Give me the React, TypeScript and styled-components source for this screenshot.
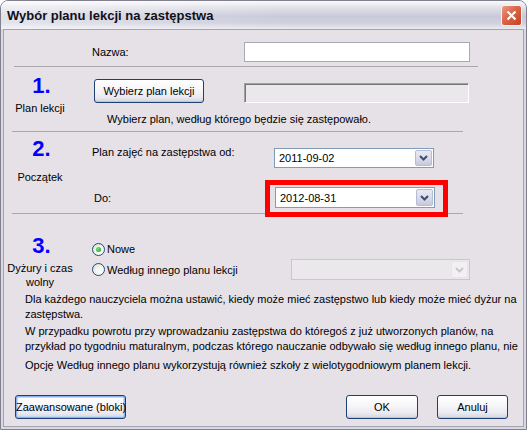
import React from "react";
import styled, { createGlobalStyle } from "styled-components";

const GlobalStyle = createGlobalStyle`
  html, body {
    margin: 0;
    padding: 0;
    background: #ffffff;
  }
  body {
    font-family: "Liberation Sans", Arial, sans-serif;
    font-size: 11px;
    color: #000;
  }
`;

const Window = styled.div`
  width: 527px;
  height: 430px;
  box-sizing: border-box;
  display: flex;
  flex-direction: column;
  border: 1px solid #80808f;
  border-radius: 8px 8px 0 0;
  overflow: hidden;
  background: #d9d7e2;
`;

const TitleBar = styled.div`
  height: 28px;
  flex: none;
  display: flex;
  align-items: center;
  justify-content: space-between;
  padding: 0 4px 0 6px;
  background: linear-gradient(to right, rgba(255, 255, 255, 0.45), rgba(255, 255, 255, 0) 55%),
    linear-gradient(#fbfbfd 0%, #e2e2ea 22%, #c9c9d9 55%, #cfcfdd 78%, #ebebf1 100%);
`;

const TitleText = styled.span`
  font-family: "Liberation Sans", Arial, sans-serif;
  font-weight: bold;
  font-size: 13px;
  color: #101018;
`;

const CloseButton = styled.span`
  width: 21px;
  height: 21px;
  box-sizing: border-box;
  border: 1px solid #f4f2f2;
  border-radius: 3px;
  background: linear-gradient(135deg, #ec9c86 0%, #dc6a4c 40%, #c4401f 100%);
  display: flex;
  align-items: center;
  justify-content: center;
  margin-top: 1px;
`;

const Frame = styled.div`
  flex: 1;
  display: flex;
  padding: 0 2px 2px;
`;

const Client = styled.div`
  flex: 1;
  display: flex;
  flex-direction: column;
  border: 1px solid #a3a3b3;
  background: #e6e1e7;
`;

const Section = styled.div<{ $h: number }>`
  height: ${(p) => p.$h}px;
  display: flex;
  flex: none;
`;

const NumCol = styled.div<{ $pt: number; $gap: number }>`
  width: 72px;
  flex: none;
  display: flex;
  flex-direction: column;
  align-items: center;
  padding-top: ${(p) => p.$pt}px;
  gap: ${(p) => p.$gap}px;
`;

const StepNumber = styled.span`
  color: #0000ff;
  font-family: "Liberation Sans", Arial, sans-serif;
  font-weight: bold;
  font-size: 22px;
  line-height: 22px;
  height: 22px;
  padding-left: 3px;
`;

const StepLabel = styled.span`
  line-height: 14px;
  text-align: center;
  width: 72px;
`;

const Body = styled.div<{ $pt: number; $gap?: number }>`
  flex: 1;
  display: flex;
  flex-direction: column;
  padding-left: 16px;
  padding-top: ${(p) => p.$pt}px;
  gap: ${(p) => p.$gap ?? 0}px;
`;

const Row = styled.div<{ $align?: string }>`
  display: flex;
  align-items: ${(p) => p.$align ?? "center"};
`;

const FieldLabel = styled.span<{ $w: number; $ml?: number; $mt?: number }>`
  width: ${(p) => p.$w}px;
  margin-left: ${(p) => p.$ml ?? 0}px;
  margin-top: ${(p) => p.$mt ?? 0}px;
  flex: none;
  line-height: 14px;
  white-space: nowrap;
`;

const TextInput = styled.div<{ $w: number }>`
  width: ${(p) => p.$w}px;
  height: 20px;
  box-sizing: border-box;
  border: 1px solid #a5acb5;
  background: #fff;
`;

const SunkenBox = styled.div<{ $w: number }>`
  width: ${(p) => p.$w}px;
  height: 20px;
  margin-left: 40px;
  box-sizing: border-box;
  border: 1px solid;
  border-color: #a0a0a0 #ffffff #ffffff #a0a0a0;
  box-shadow: inset 1px 1px 0 #777777, inset -1px -1px 0 #e8e6ea;
  background: #ebe8ec;
`;

const Button = styled.button<{ $w: number; $focused?: boolean; $ml?: number }>`
  width: ${(p) => p.$w}px;
  height: 24px;
  margin-left: ${(p) => p.$ml ?? 0}px;
  padding: 0;
  box-sizing: border-box;
  border: 1px solid #1c3f74;
  border-radius: 3px;
  background: linear-gradient(#ffffff 0%, #f6f6f9 45%, #e8e8ef 80%, #d3d3df 100%);
  box-shadow: ${(p) =>
    p.$focused
      ? "inset 0 0 0 1px #8eb0ec, inset 0 0 0 2px #c2d6f7"
      : "inset 0 -1px 0 #c4c4d4"};
  font-family: "Liberation Sans", Arial, sans-serif;
  font-size: 11px;
  color: #000;
  white-space: nowrap;
  flex: none;
`;

const Hint = styled.span`
  margin-left: 15px;
  line-height: 14px;
`;

const Combo = styled.div<{ $w: number; $h?: number; $disabled?: boolean; $mt?: number }>`
  position: relative;
  width: ${(p) => p.$w}px;
  height: ${(p) => p.$h ?? 20}px;
  margin-top: ${(p) => p.$mt ?? 0}px;
  box-sizing: border-box;
  border: 1px solid ${(p) => (p.$disabled ? "#cbc8c0" : "#7f9db9")};
  background: ${(p) => (p.$disabled ? "#ebe8ec" : "#ffffff")};
  display: flex;
  align-items: stretch;
  flex: none;
`;

const ComboText = styled.span`
  flex: 1;
  padding-left: 4px;
  display: flex;
  align-items: center;
  font-size: 11px;
`;

const ComboArrow = styled.span<{ $disabled?: boolean }>`
  width: 17px;
  margin: 1px;
  box-sizing: border-box;
  border: 1px solid ${(p) => (p.$disabled ? "#e6e4e4" : "#b4bcd6")};
  border-radius: 2px;
  background: ${(p) =>
    p.$disabled ? "#f2f0f2" : "linear-gradient(#eaeaf4 0%, #d8d8e8 60%, #c8c8dc 100%)"};
  display: flex;
  align-items: center;
  justify-content: center;
`;

const Highlight = styled.span`
  position: absolute;
  top: -8px;
  left: -11px;
  right: -14px;
  bottom: -10px;
  border: 5px solid #ff0000;
  pointer-events: none;
`;

const Divider = styled.div<{ $ml: number; $w: number }>`
  height: 1px;
  flex: none;
  margin-left: ${(p) => p.$ml}px;
  width: ${(p) => p.$w}px;
  background: #a8a7ac;
`;

const RadioRow = styled.label`
  display: flex;
  align-items: center;
  gap: 2px;
  line-height: 14px;
  white-space: nowrap;
`;

const RadioCircle = styled.span<{ $checked?: boolean }>`
  width: 13px;
  height: 13px;
  box-sizing: border-box;
  border-radius: 50%;
  border: 1px solid #1c5180;
  background: radial-gradient(circle at 65% 65%, #ffffff 0%, #f3f3ef 45%, #d4d4cc 100%);
  display: inline-flex;
  align-items: center;
  justify-content: center;
  flex: none;

  &::after {
    content: "";
    width: 5px;
    height: 5px;
    border-radius: 50%;
    background: radial-gradient(circle at 35% 35%, #6fe86f, #1c9a1c);
    display: ${(p) => (p.$checked ? "block" : "none")};
  }
`;

const RadioLabelBox = styled.div`
  width: 199px;
  flex: none;
`;

const Notes = styled.div`
  display: flex;
  flex-direction: column;
  padding-left: 21px;
`;

const Para = styled.div<{ $mb: number }>`
  line-height: 15px;
  margin-bottom: ${(p) => p.$mb}px;
`;

const Line = styled.div`
  white-space: nowrap;
`;

const ButtonBar = styled.div`
  margin-top: auto;
  display: flex;
  align-items: center;
  padding: 0 15px 7px 11px;
`;

const Spacer = styled.div`
  flex: 1;
`;

const Chevron = ({ color }: { color: string }) => (
  <svg width="9" height="6" viewBox="0 0 9 6">
    <path d="M1 1 L4.5 4.5 L8 1" fill="none" stroke={color} strokeWidth="2" />
  </svg>
);

const DateCombo = ({ value }: { value: string }) => (
  <>
    <ComboText>{value}</ComboText>
    <ComboArrow>
      <Chevron color="#3d4f73" />
    </ComboArrow>
  </>
);

export default function App() {
  return (
    <>
      <GlobalStyle />
      <Window>
        <TitleBar>
          <TitleText>Wybór planu lekcji na zastępstwa</TitleText>
          <CloseButton>
            <svg width="11" height="11" viewBox="0 0 11 11">
              <path d="M1.5 1.5 L9.5 9.5 M9.5 1.5 L1.5 9.5" stroke="#fff" strokeWidth="2.2" />
            </svg>
          </CloseButton>
        </TitleBar>
        <Frame>
          <Client>
            {/* nazwa */}
            <Section $h={36}>
              <NumCol $pt={0} $gap={0} />
              <Body $pt={12}>
                <Row>
                  <FieldLabel $w={152}>Nazwa:</FieldLabel>
                  <TextInput $w={226} />
                </Row>
              </Body>
            </Section>
            <Divider $ml={10} $w={464} />

            {/* 1. plan lekcji */}
            <Section $h={64}>
              <NumCol $pt={8} $gap={4}>
                <StepNumber>1.</StepNumber>
                <StepLabel>Plan lekcji</StepLabel>
              </NumCol>
              <Body $pt={12} $gap={9}>
                <Row $align="flex-end">
                  <Button $w={110} $ml={2}>Wybierz plan lekcji</Button>
                  <SunkenBox $w={225} />
                </Row>
                <Hint>Wybierz plan, według którego będzie się zastępowało.</Hint>
              </Body>
            </Section>
            <Divider $ml={8} $w={451} />

            {/* 2. początek */}
            <Section $h={81}>
              <NumCol $pt={6} $gap={10}>
                <StepNumber>2.</StepNumber>
                <StepLabel>Początek</StepLabel>
              </NumCol>
              <Body $pt={13} $gap={19}>
                <Row $align="flex-start">
                  <FieldLabel $w={182}>Plan zajęć na zastępstwa od:</FieldLabel>
                  <Combo $w={160} $mt={3}>
                    <DateCombo value="2011-09-02" />
                  </Combo>
                </Row>
                <Row>
                  <FieldLabel $w={181} $ml={2}>Do:</FieldLabel>
                  <Combo $w={160} $h={21}>
                    <DateCombo value="2012-08-31" />
                    <Highlight />
                  </Combo>
                </Row>
              </Body>
            </Section>
            <Divider $ml={8} $w={451} />

            {/* 3. dyżury */}
            <Section $h={78}>
              <NumCol $pt={21} $gap={4}>
                <StepNumber>3.</StepNumber>
                <StepLabel>
                  Dyżury i czas
                  <br />
                  wolny
                </StepLabel>
              </NumCol>
              <Body $pt={28} $gap={3}>
                <Row>
                  <RadioRow>
                    <RadioCircle $checked />
                    Nowe
                  </RadioRow>
                </Row>
                <Row>
                  <RadioLabelBox>
                    <RadioRow>
                      <RadioCircle />
                      Według innego planu lekcji
                    </RadioRow>
                  </RadioLabelBox>
                  <Combo $w={179} $h={21} $disabled>
                    <ComboText />
                    <ComboArrow $disabled>
                      <Chevron color="#c9c7cc" />
                    </ComboArrow>
                  </Combo>
                </Row>
              </Body>
            </Section>

            <Notes>
              <Para $mb={2}>
                <Line>
                  Dla każdego nauczyciela można ustawić, kiedy może mieć zastępstwo lub kiedy może mieć dyżur na
                </Line>
                <Line>zastępstwa.</Line>
              </Para>
              <Para $mb={4}>
                <Line>
                  W przypadku powrotu przy wprowadzaniu zastępstwa do któregoś z już utworzonych planów, na
                </Line>
                <Line>
                  przykład po tygodniu maturalnym, podczas którego nauczanie odbywało się według innego planu, nie
                </Line>
              </Para>
              <Para $mb={0}>
                <Line>Opcję Według innego planu wykorzystują również szkoły z wielotygodniowym planem lekcji.</Line>
              </Para>
            </Notes>

            <ButtonBar>
              <Button $w={111} $focused>
                Zaawansowane (bloki)
              </Button>
              <Spacer />
              <Button $w={72}>OK</Button>
              <Button $w={71} $ml={19}>
                Anuluj
              </Button>
            </ButtonBar>
          </Client>
        </Frame>
      </Window>
    </>
  );
}
